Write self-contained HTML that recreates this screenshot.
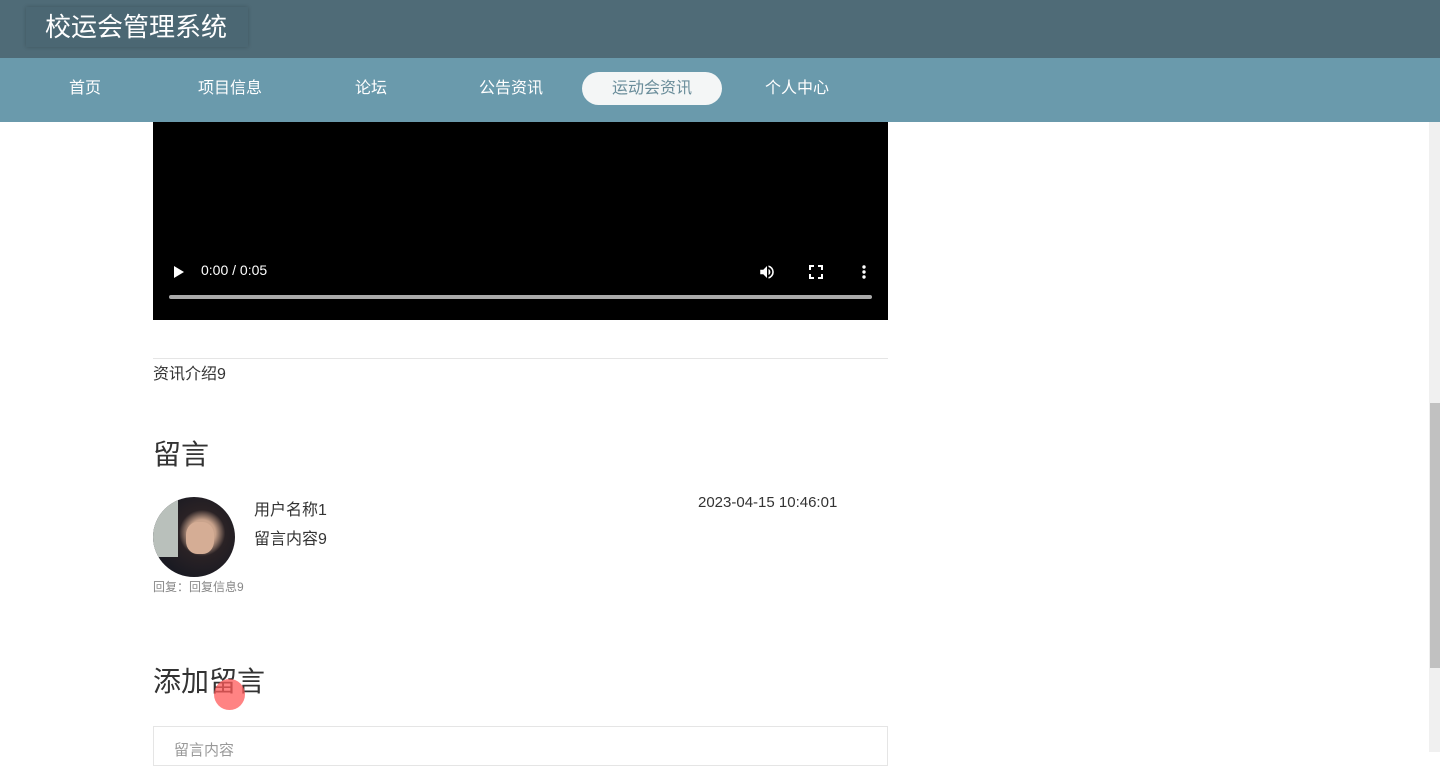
<!DOCTYPE html>
<html><head><meta charset="utf-8"><style>
*{margin:0;padding:0;box-sizing:border-box}
body{width:1440px;height:752px;overflow:hidden;background:#fff;font-family:"Liberation Sans","Noto Sans CJK SC",sans-serif;position:relative;color:#333}
.top{position:absolute;left:0;top:0;width:1440px;height:58px;background:#4f6b77}
.logo{position:absolute;left:26px;top:7px;width:222px;height:40px;background:#4b6773;box-shadow:0 0 4px rgba(0,0,0,.2);color:#fff;font-size:26px;line-height:40px;padding-left:19px}
.nav{position:absolute;left:0;top:58px;width:1440px;height:64px;background:#6a9aac}
.nav span{position:absolute;top:0;line-height:62px;color:#fff;font-size:16px}
.nav .act{top:14px;height:33px;line-height:33px;width:140px;background:#f4f6f6;border-radius:17px;color:#6a8d9a;text-align:center;left:582px}
.video{position:absolute;left:153px;top:122px;width:735px;height:198px;background:#000}
.sb{position:absolute;left:1429px;top:122px;width:11px;height:630px;background:#f0f0f0}
.thumb{position:absolute;left:1430px;top:403px;width:10px;height:265px;background:#c1c1c1}
</style></head><body>
<div class="top"><div class="logo">校运会管理系统</div></div>
<div class="nav">
<span style="left:69px">首页</span>
<span style="left:198px">项目信息</span>
<span style="left:355px">论坛</span>
<span style="left:479px">公告资讯</span>
<span class="act">运动会资讯</span>
<span style="left:765px">个人中心</span>
</div>
<div class="video">
<svg style="position:absolute;left:20px;top:143px" width="12" height="14"><path d="M1 1L11 7L1 13Z" fill="#fff"/></svg>
<div style="position:absolute;left:48px;top:140px;color:#fff;font-size:14px">0:00 / 0:05</div>
<svg style="position:absolute;left:605px;top:141px" width="18" height="18" viewBox="0 0 24 24"><path d="M3 9v6h4l5 5V4L7 9H3zm13.5 3A4.5 4.5 0 0014 8v8a4.5 4.5 0 002.5-4zM14 3.2v2.1a7 7 0 010 13.4v2.1a9 9 0 000-17.6z" fill="#fff"/></svg>
<svg style="position:absolute;left:656px;top:143px" width="14" height="14" viewBox="0 0 14 14"><path d="M1 5V1h4M9 1h4v4M13 9v4H9M5 13H1V9" stroke="#fff" stroke-width="2" fill="none"/></svg>
<svg style="position:absolute;left:708px;top:142px" width="6" height="16"><circle cx="3" cy="3" r="1.7" fill="#fff"/><circle cx="3" cy="8" r="1.7" fill="#fff"/><circle cx="3" cy="13" r="1.7" fill="#fff"/></svg>
<div style="position:absolute;left:16px;top:173px;width:703px;height:4px;background:#aaa;border-radius:2px"></div>
</div>
<div style="position:absolute;left:153px;top:358px;width:735px;border-top:1px solid #e5e5e5"></div>
<div style="position:absolute;left:153px;top:360px;font-size:16px">资讯介绍9</div>
<div style="position:absolute;left:153px;top:433px;font-size:28px">留言</div>
<div style="position:absolute;left:153px;top:497px;width:82px;height:80px;border-radius:50%;background:radial-gradient(circle at 60% 45%,#c9a38c 0 20%,#2a2225 35%,#1a1a22 70%);overflow:hidden"><div style="position:absolute;left:0;top:0;width:25px;height:60px;background:#b9c0bb"></div><div style="position:absolute;left:33px;top:25px;width:28px;height:32px;border-radius:40%;background:#d5ad95"></div></div>
<div style="position:absolute;left:254px;top:496px;font-size:16px">用户名称1</div>
<div style="position:absolute;left:254px;top:525px;font-size:16px">留言内容9</div>
<div style="position:absolute;left:698px;top:494px;font-size:15px">2023-04-15 10:46:01</div>
<div style="position:absolute;left:153px;top:578px;font-size:12px;color:#888">回复：回复信息9</div>
<div style="position:absolute;left:153px;top:660px;font-size:28px">添加留言</div>
<div style="position:absolute;left:214px;top:679px;width:31px;height:31px;border-radius:50%;background:rgba(255,90,90,.75)"></div>
<div style="position:absolute;left:153px;top:726px;width:735px;height:40px;border:1px solid #e5e5e5"><div style="position:absolute;left:20px;top:12px;font-size:15px;color:#999">留言内容</div></div>
<div class="sb"></div><div class="thumb"></div>
</body></html>
